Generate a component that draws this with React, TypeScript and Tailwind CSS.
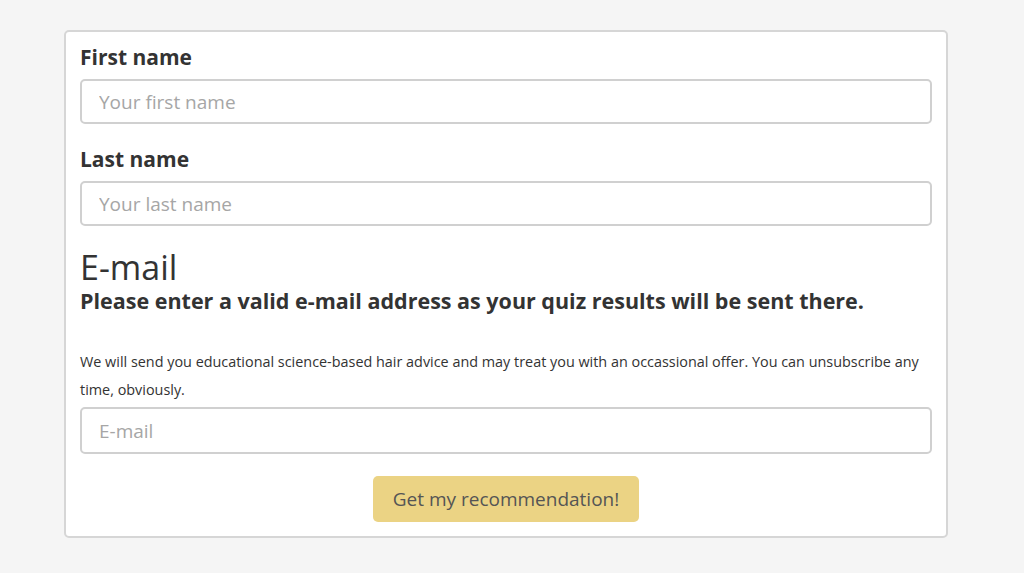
import React from "react";

const font = { fontFamily: '"Open Sans", "Liberation Sans", sans-serif' };

function Field({ label, placeholder }: { label: string; placeholder: string }) {
  return (
    <div className="mb-[21px]">
      <label className="block text-[21px] leading-[28px] font-bold text-[#333] mb-[8px]">{label}</label>
      <input
        className="block w-full h-[45px] px-[17px] rounded-[5px] border-2 border-[#d0d0d0] bg-white text-[19px] text-[#333] placeholder:text-[#a6a6a6] outline-none"
        placeholder={placeholder}
      />
    </div>
  );
}

export default function App() {
  return (
    <div className="min-h-[573px] w-full bg-[#f5f5f5] pt-[30px]" style={font}>
      <div className="ml-[64px] w-[884px] bg-white border-2 border-[#d6d6d6] rounded-[5px] px-[14px] pt-[11px] pb-[14px]">
        <Field label="First name" placeholder="Your first name" />
        <Field label="Last name" placeholder="Your last name" />

        <div className="text-[34px] leading-[40px] text-[#333]">E-mail</div>
        <div className="text-[21.5px] leading-[28px] font-bold text-[#333]">
          Please enter a valid e-mail address as your quiz results will be sent there.
        </div>
        <p className="mt-[33px] text-[14.4px] leading-[28px] text-[#333]">
          We will send you educational science-based hair advice and may treat you with an occassional offer. You can unsubscribe any time, obviously.
        </p>
        <input
          className="mt-[3px] block w-full h-[47px] px-[17px] rounded-[5px] border-2 border-[#d0d0d0] bg-white text-[19px] text-[#333] placeholder:text-[#a6a6a6] outline-none"
          placeholder="E-mail"
        />
        <div className="flex justify-center mt-[22px]">
          <button className="h-[46px] w-[266px] rounded-[5px] bg-[#ebd384] text-[19px] text-[#555]">
            Get my recommendation!
          </button>
        </div>
      </div>
    </div>
  );
}
